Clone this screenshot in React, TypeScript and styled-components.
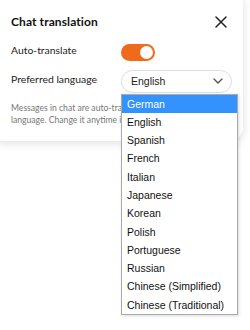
import React from 'react'
import styled, { createGlobalStyle } from 'styled-components'

const GlobalStyle = createGlobalStyle`
  html, body {
    margin: 0;
    padding: 0;
    background: #ffffff;
  }
  body {
    width: 250px;
    height: 330px;
    overflow: hidden;
    font-family: Lato, 'Noto Sans', sans-serif;
  }
`

const LANGUAGES = [
  'German',
  'English',
  'Spanish',
  'French',
  'Italian',
  'Japanese',
  'Korean',
  'Polish',
  'Portuguese',
  'Russian',
  'Chinese (Simplified)',
  'Chinese (Traditional)'
]

const Card = styled.div`
  margin: -10px 0 0 -10px;
  width: 253px;
  box-sizing: border-box;
  padding: 21px 16px 15px 21px;
  background: #ffffff;
  border-radius: 14px;
  box-shadow: 0 2px 10px rgba(0, 0, 0, 0.13);
`
const Header = styled.div`
  display: flex;
  justify-content: space-between;
  align-items: center;
  height: 20px;
  margin-bottom: 8px;
`
const Title = styled.div`
  font-size: 12px;
  font-weight: 700;
  color: #111111;
  letter-spacing: 0.1px;
`
const CloseButton = styled.button`
  display: flex;
  padding: 0;
  margin-top: 1px;
  border: none;
  background: none;
  color: #222222;
`
const Row = styled.div`
  display: grid;
  grid-template-columns: 110px 1fr;
  align-items: center;
  height: 26px;
  margin-bottom: 3px;
`
const Label = styled.div`
  font-size: 10.4px;
  color: #222222;
  margin-top: -4px;
`
const Toggle = styled.div<{ $on: boolean }>`
  width: 34px;
  height: 17px;
  border-radius: 9px;
  background: ${props => (props.$on ? '#f06a1c' : '#cccccc')};
  display: flex;
  align-items: center;
  justify-content: ${props => (props.$on ? 'flex-end' : 'flex-start')};
  padding: 0 2px;
  box-sizing: border-box;
`
const Knob = styled.div`
  width: 13px;
  height: 13px;
  border-radius: 50%;
  background: #ffffff;
`
const SelectWrap = styled.div`
  position: relative;
`
const SelectBox = styled.div`
  width: 111px;
  height: 23px;
  box-sizing: border-box;
  border: 1px solid #dddddd;
  border-radius: 12px;
  display: flex;
  align-items: center;
  justify-content: space-between;
  padding: 0 8px 0 9px;
  font-family: 'Liberation Sans', Arial, sans-serif;
  font-size: 10.5px;
  color: #222222;
`
const Dropdown = styled.ul`
  position: absolute;
  top: 24px;
  left: 0;
  width: 115px;
  margin: 0;
  padding: 0;
  list-style: none;
  background: #ffffff;
  border: 1px solid #a9a9a9;
  box-shadow: 1px 1px 3px rgba(0, 0, 0, 0.15);
  font-family: 'Liberation Sans', Arial, sans-serif;
  font-size: 10.5px;
  z-index: 10;
`
const Option = styled.li<{ $active?: boolean }>`
  height: 18.3px;
  line-height: 18.3px;
  padding: 0 5px;
  white-space: nowrap;
  color: ${props => (props.$active ? '#ffffff' : '#111111')};
  background: ${props => (props.$active ? '#3392fb' : 'transparent')};
`
const Note = styled.p`
  margin: 8px 0 0;
  font-size: 8.6px;
  line-height: 12px;
  color: #777777;
`

const CloseIcon = () => (
  <svg width='12' height='12' viewBox='0 0 12 12'>
    <path d='M1 1 L11 11 M11 1 L1 11' stroke='currentColor' strokeWidth='1.5' strokeLinecap='round' />
  </svg>
)

const ChevronIcon = () => (
  <svg width='10' height='6' viewBox='0 0 10 6'>
    <path d='M1 1 L5 5 L9 1' stroke='#555555' strokeWidth='1.4' fill='none' strokeLinecap='round' />
  </svg>
)

export default function App() {
  return (
    <>
      <GlobalStyle />
      <Card>
        <Header>
          <Title>Chat translation</Title>
          <CloseButton aria-label='Close'>
            <CloseIcon />
          </CloseButton>
        </Header>
        <Row>
          <Label>Auto-translate</Label>
          <Toggle $on>
            <Knob />
          </Toggle>
        </Row>
        <Row>
          <Label>Preferred language</Label>
          <SelectWrap>
            <SelectBox>
              English
              <ChevronIcon />
            </SelectBox>
            <Dropdown>
              {LANGUAGES.map((lang, i) => (
                <Option key={lang} $active={i === 0}>
                  {lang}
                </Option>
              ))}
            </Dropdown>
          </SelectWrap>
        </Row>
        <Note>
          Messages in chat are auto-translated to your
          <br />
          language. Change it anytime in settings.
        </Note>
      </Card>
    </>
  )
}
